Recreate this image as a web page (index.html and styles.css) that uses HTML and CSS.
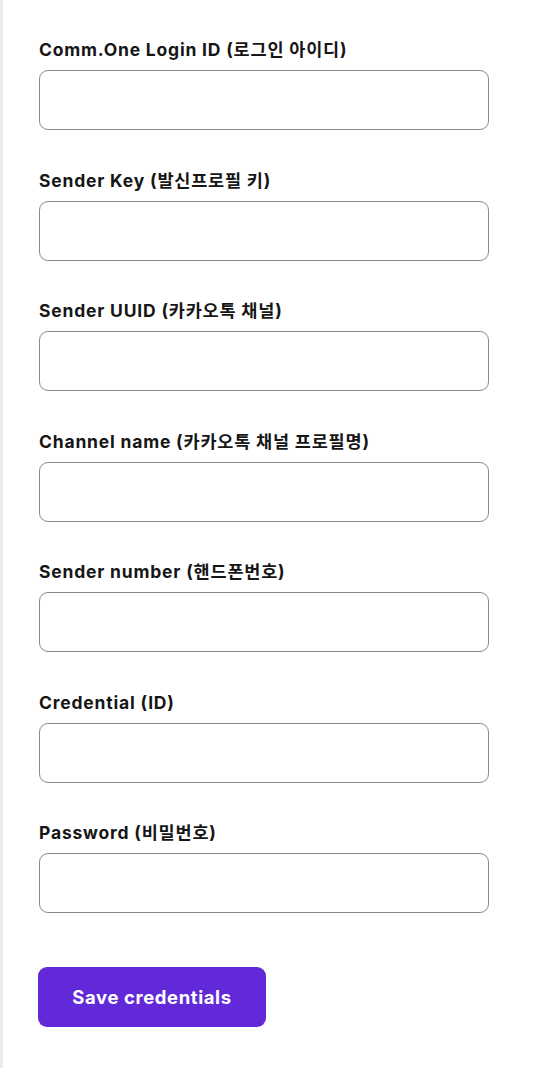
FILE: index.html
```html
<!DOCTYPE html>
<html lang="ko">
<head>
<meta charset="utf-8">
<link rel="stylesheet" href="styles.css">
</head>
<body>
<div class="panel">
  <form class="form">
    <div class="field">
      <label class="label">Comm.One Login ID (로그인 아이디)</label>
      <input class="input" type="text">
    </div>
    <div class="field">
      <label class="label">Sender Key (발신프로필 키)</label>
      <input class="input" type="text">
    </div>
    <div class="field">
      <label class="label">Sender UUID (카카오톡 채널)</label>
      <input class="input" type="text">
    </div>
    <div class="field">
      <label class="label">Channel name (카카오톡 채널 프로필명)</label>
      <input class="input" type="text">
    </div>
    <div class="field">
      <label class="label">Sender number (핸드폰번호)</label>
      <input class="input" type="text">
    </div>
    <div class="field">
      <label class="label">Credential (ID)</label>
      <input class="input" type="text">
    </div>
    <div class="field">
      <label class="label">Password (비밀번호)</label>
      <input class="input" type="password">
    </div>
    <div class="actions">
      <button class="button" type="button">Save credentials</button>
    </div>
  </form>
</div>
</body>
</html>
```
FILE: styles.css
```css
html, body {
  margin: 0;
  padding: 0;
  background: #ffffff;
}
body {
  font-family: Inter, "Noto Sans CJK KR", sans-serif;
  color: #161616;
}
.panel {
  min-height: 1068px;
  box-sizing: border-box;
  border-left: 3px solid #ebebeb;
  padding: 40px 0 0 36px;
}
.form {
  display: flex;
  flex-direction: column;
  gap: 40.5px;
  width: 450px;
}
.field {
  display: flex;
  flex-direction: column;
  gap: 10px;
}
.label {
  font-size: 17.5px;
  line-height: 20px;
  font-weight: 700;
  letter-spacing: 0.8px;
  color: #161616;
}
.input {
  box-sizing: border-box;
  width: 450px;
  height: 60px;
  margin: 0;
  border: 1px solid #8a8a8a;
  border-radius: 9px;
  background: #fff;
  font: inherit;
  padding: 0 14px;
}
.actions {
  padding-top: 13.5px;
}
.button {
  box-sizing: border-box;
  width: 228px;
  height: 60px;
  margin: 0 0 0 -1px;
  border: 0;
  border-radius: 9px;
  background: #6229d8;
  color: #ffffff;
  font-family: Inter, "Noto Sans CJK KR", sans-serif;
  font-size: 18.5px;
  font-weight: 700;
  letter-spacing: 0.6px;
}
```
